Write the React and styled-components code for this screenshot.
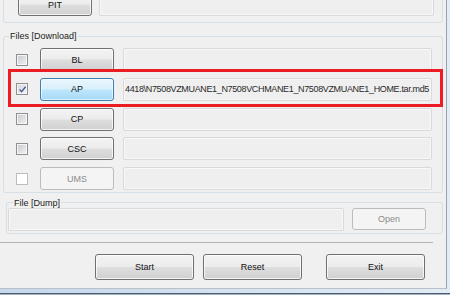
import React from 'react'
import styled, { createGlobalStyle, css } from 'styled-components'

const GlobalStyle = createGlobalStyle`
  html, body { margin: 0; padding: 0; }
  body {
    width: 450px;
    height: 295px;
    overflow: hidden;
    font-family: "Liberation Sans", Arial, sans-serif;
    font-size: 9px;
    color: #1b1b1b;
    background: #d7e4f2;
  }
`

const AP_PATH = '4418\\N7508VZMUANE1_N7508VCHMANE1_N7508VZMUANE1_HOME.tar.md5'

const rows = [
    { name: 'BL' },
    { name: 'AP', checked: true, hot: true, value: AP_PATH },
    { name: 'CP' },
    { name: 'CSC' },
    { name: 'UMS', disabled: true },
]

const Frame = styled.div`
  width: 450px;
  height: 295px;
  background: linear-gradient(90deg, #c6d8ec, #e3ecf6);
  box-shadow: inset 0 -1px 0 #9fb2c7, inset 0 -2px 0 #4f5c6c;
`

const Client = styled.div`
  box-sizing: border-box;
  width: 447px;
  height: 289px;
  background: #f0f0f0;
  border-right: 1px solid #9aa3ad;
  border-bottom: 1px solid #b9c0c8;
  display: flex;
  flex-direction: column;
  overflow: hidden;
`

const TopGroup = styled.div`
  box-sizing: border-box;
  margin: -10px 3px 0;
  height: 33px;
  border: 1px solid #d5dfe5;
  border-radius: 3px;
  display: grid;
  grid-template-columns: 74px 1fr;
  column-gap: 7px;
  align-items: end;
  padding: 0 8px 6px 14px;
`

// padding lives on the inner content so the legend sits right by the border
const Group = styled.fieldset`
  min-width: 0;
  margin: ${p => p.$margin};
  padding: 0;
  border: 1px solid #d5dfe5;
  border-radius: 3px;
`

const Legend = styled.legend`
  margin-left: ${p => p.$indent}px;
  padding: 0 1px;
  line-height: 10px;
  color: #1b1b1b;
`

const Rows = styled.div`
  display: flex;
  flex-direction: column;
  gap: 6.75px;
  padding: 7px 10px 2px 10px;
`

const Row = styled.div`
  position: relative;
  display: grid;
  grid-template-columns: 17px 74px 1fr;
  column-gap: 9px;
  align-items: center;
  height: 23px;

  ${p => p.$marked && css`
    &::after {
      content: '';
      position: absolute;
      left: -6px;
      right: -11px;
      top: -9px;
      bottom: -6px;
      border: 3px solid #ec1c24;
      pointer-events: none;
    }
  `}
`

const Check = styled.span`
  box-sizing: border-box;
  width: 12px;
  height: 12px;
  margin-left: 2px;
  display: grid;
  place-items: center;
  border: 1px solid #8f8f8f;
  background: linear-gradient(135deg, #c4c8ce, #f3f3f3);
  box-shadow: inset 0 0 0 1px #f6f6f6;

  ${p => p.$disabled && css`
    border-color: #bdbdbd;
    background: #ffffff;
    box-shadow: none;
  `}
  ${p => p.$checked && css`
    background: linear-gradient(135deg, #d3d6db, #f6f6f6);
  `}
`

const Button = styled.button`
  box-sizing: border-box;
  width: ${p => p.$w || 74}px;
  height: ${p => p.$h || 23}px;
  margin: 0;
  padding: 0;
  font: inherit;
  color: #111;
  border: 1px solid #707070;
  border-radius: 3px;
  background: linear-gradient(#f3f3f3, #ececec 48%, #dedede 52%, #d0d0d0);
  box-shadow: inset 0 0 0 1px rgba(255, 255, 255, 0.75);
  cursor: default;

  ${p => p.$hot && css`
    border-color: #3c7fb1;
    background: linear-gradient(#eaf6fd, #d9f0fc 48%, #bee6fd 52%, #a7d9f5);
    box-shadow: inset 0 0 0 1px rgba(255, 255, 255, 0.6);
  `}

  &:disabled {
    color: #8b8b8b;
    border-color: #b8bcbf;
    background: #f4f4f4;
    box-shadow: none;
  }
`

const Field = styled.div`
  box-sizing: border-box;
  height: 23px;
  min-width: 0;
  padding: 0 2px;
  display: flex;
  align-items: center;
  justify-content: flex-end;
  overflow: hidden;
  white-space: nowrap;
  color: #2a2a2a;
  letter-spacing: -0.35px;
  border: 1px solid #d9d9d9;
  border-radius: 2px;
  background: #efefef;
  box-shadow: inset 0 0 0 1px #f8f8f8;
`

const DumpLine = styled.div`
  display: flex;
  align-items: flex-start;
  gap: 8px;
  padding: 0 16px 2px 1px;

  ${Field} {
    flex: 1;
  }
`

const Separator = styled.hr`
  margin: 8px 13px 0 0;
  height: 0;
  border: 0;
  border-top: 1px solid #b4b4b4;
`

const ButtonBar = styled.div`
  margin-top: 11px;
  padding-right: 21px;
  display: flex;
  justify-content: flex-end;
  gap: 9px;
`

const CheckMark = () => (
    <svg width="9" height="9" viewBox="0 0 9 9">
        <path d="M1.6 4.6 L3.6 6.7 L7.6 1.8" fill="none" stroke="#4b5f95" strokeWidth="1.5" />
    </svg>
)

const App = () => {
    return (
        <Frame>
            <GlobalStyle />
            <Client>
                <TopGroup>
                    <Button>PIT</Button>
                    <Field />
                </TopGroup>

                <Group $margin="8px 3px 0">
                    <Legend $indent={5}>Files [Download]</Legend>
                    <Rows>
                        {rows.map(r => (
                            <Row key={r.name} $marked={r.hot}>
                                <Check $checked={r.checked} $disabled={r.disabled}>
                                    {r.checked && <CheckMark />}
                                </Check>
                                <Button $hot={r.hot} disabled={r.disabled}>{r.name}</Button>
                                <Field>{r.value}</Field>
                            </Row>
                        ))}
                    </Rows>
                </Group>

                <Group $margin="4.5px 3px 0 6px">
                    <Legend $indent={6}>File [Dump]</Legend>
                    <DumpLine>
                        <Field />
                        <Button $h={22} disabled>Open</Button>
                    </DumpLine>
                </Group>

                <Separator />

                <ButtonBar>
                    <Button $w={99} $h={26}>Start</Button>
                    <Button $w={99} $h={26}>Reset</Button>
                    <Button $w={99} $h={26} style={{ marginLeft: 15 }}>Exit</Button>
                </ButtonBar>
            </Client>
        </Frame>
    )
}

export default App
